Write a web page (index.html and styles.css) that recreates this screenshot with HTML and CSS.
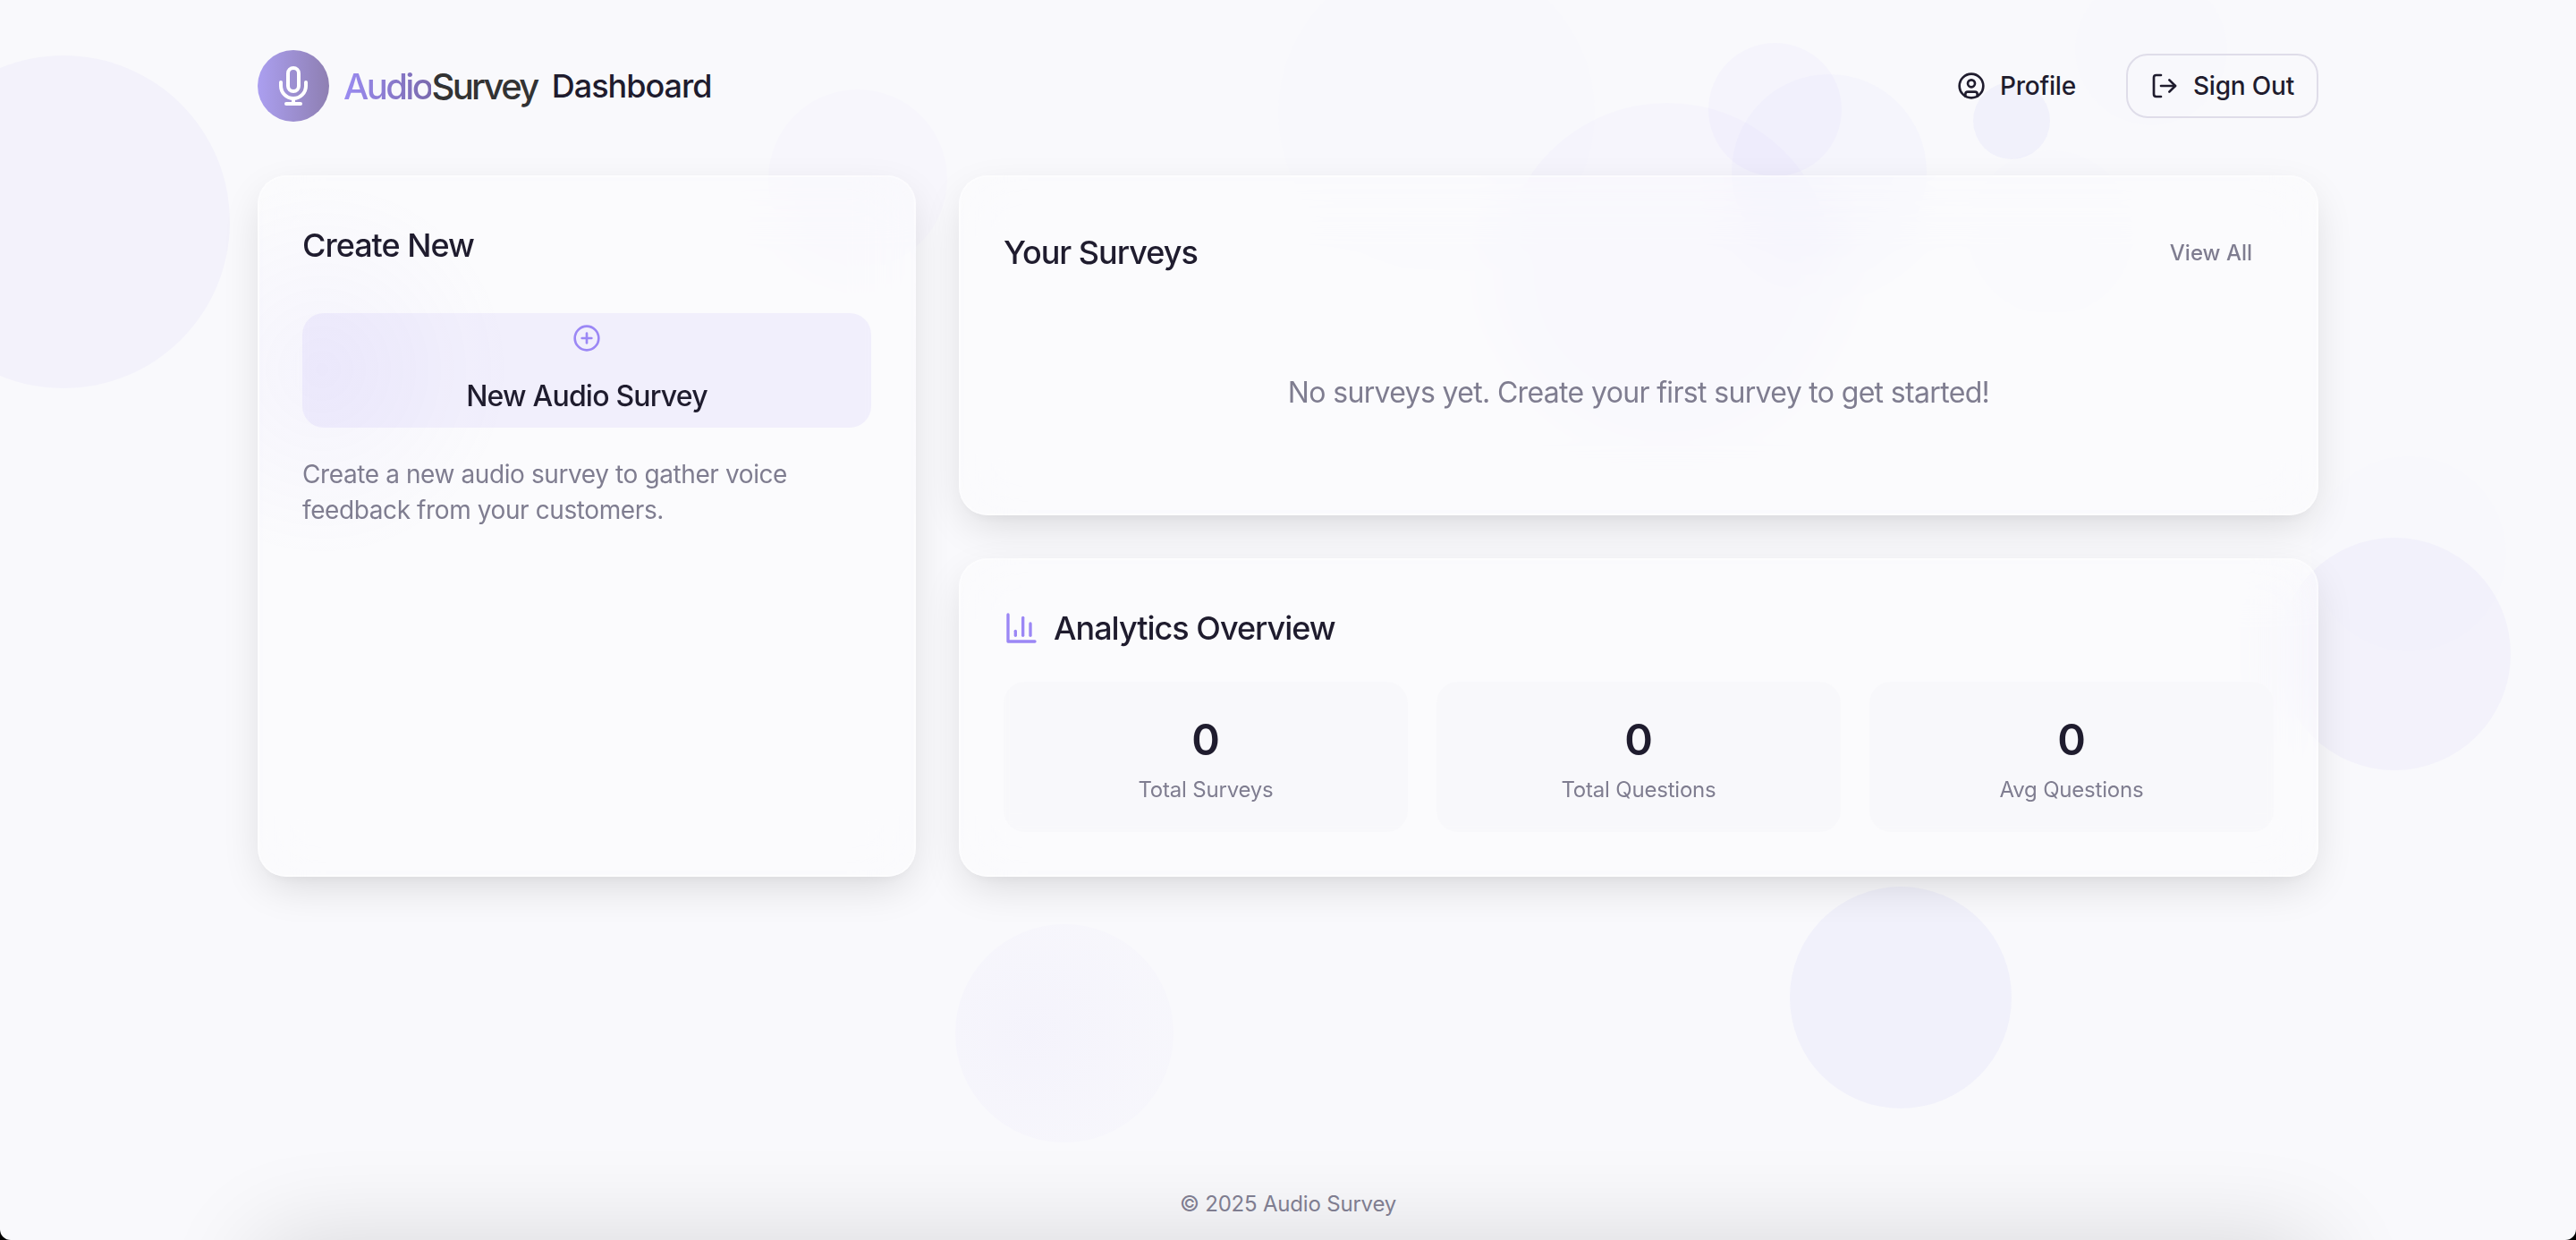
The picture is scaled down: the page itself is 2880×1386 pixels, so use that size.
FILE: index.html
```html
<!DOCTYPE html>
<html lang="en">
<head>
    <meta charset="UTF-8">
    <meta name="viewport" content="width=device-width, initial-scale=1.0">
    <title>AudioSurvey Dashboard</title>
    <link rel="stylesheet" href="styles.css">
</head>
<body>
    <!-- background bubbles -->
    <div class="bubbles">
        <span class="bubble b-left"></span>
        <span class="bubble b-top-card"></span>
        <span class="bubble b-top-faint"></span>
        <span class="bubble b-center"></span>
        <span class="bubble b-top-a"></span>
        <span class="bubble b-top-b"></span>
        <span class="bubble b-small"></span>
        <span class="bubble b-top-c"></span>
        <span class="bubble b-top-d"></span>
        <span class="bubble b-right"></span>
        <span class="bubble b-right-faint"></span>
        <span class="bubble b-bottom-a"></span>
        <span class="bubble b-bottom-b"></span>
    </div>

    <div class="container">
        <header class="header">
            <div class="brand">
                <div class="logo">
                    <svg class="icon icon-48" viewBox="0 0 24 24">
                        <path d="M12 2a3 3 0 0 0-3 3v7a3 3 0 0 0 6 0V5a3 3 0 0 0-3-3Z"/>
                        <path d="M19 10v2a7 7 0 0 1-14 0v-2"/>
                        <path d="M12 19v3"/>
                        <path d="M8 22h8"/>
                    </svg>
                </div>
                <span class="wordmark"><span class="wordmark-accent">Audio</span>Survey</span>
                <h1 class="page-title">Dashboard</h1>
            </div>
            <nav class="nav">
                <a class="nav-btn">
                    <svg class="icon icon-32" viewBox="0 0 24 24">
                        <circle cx="12" cy="12" r="10"/>
                        <circle cx="12" cy="10" r="3"/>
                        <path d="M7 20.662V19a2 2 0 0 1 2-2h6a2 2 0 0 1 2 2v1.662"/>
                    </svg>
                    Profile
                </a>
                <a class="nav-btn nav-btn-outline">
                    <svg class="icon icon-32" viewBox="0 0 24 24">
                        <path d="M9 21H5a2 2 0 0 1-2-2V5a2 2 0 0 1 2-2h4"/>
                        <path d="m16 17 5-5-5-5"/>
                        <path d="M21 12H9"/>
                    </svg>
                    Sign Out
                </a>
            </nav>
        </header>

        <main class="grid">
            <section class="card card-create">
                <h2 class="card-title create-title">Create New</h2>
                <button class="new-survey" type="button">
                    <svg class="icon icon-32 accent" viewBox="0 0 24 24">
                        <circle cx="12" cy="12" r="10"/>
                        <path d="M8 12h8"/>
                        <path d="M12 8v8"/>
                    </svg>
                    <span>New Audio Survey</span>
                </button>
                <p class="hint">Create a new audio survey to gather voice feedback from your customers.</p>
            </section>

            <div class="right-col">
                <section class="card">
                    <div class="card-head">
                        <h2 class="card-title">Your Surveys</h2>
                        <a class="view-all">View All</a>
                    </div>
                    <p class="empty">No surveys yet. Create your first survey to get started!</p>
                </section>

                <section class="card">
                    <div class="analytics-head">
                        <svg class="icon icon-40 accent" viewBox="0 0 24 24">
                            <path d="M3 3v18h18"/>
                            <path d="M18 17V9"/>
                            <path d="M13 17V5"/>
                            <path d="M8 17v-3"/>
                        </svg>
                        <h2 class="card-title">Analytics Overview</h2>
                    </div>
                    <div class="stats">
                        <div class="stat">
                            <div class="stat-value">0</div>
                            <div class="stat-label">Total Surveys</div>
                        </div>
                        <div class="stat">
                            <div class="stat-value">0</div>
                            <div class="stat-label">Total Questions</div>
                        </div>
                        <div class="stat">
                            <div class="stat-value">0</div>
                            <div class="stat-label">Avg Questions</div>
                        </div>
                    </div>
                </section>
            </div>
        </main>
    </div>

    <footer class="footer">
        <div class="fold-clip"><div class="fold-card"></div></div>
        <span class="footer-text">© 2025 Audio Survey</span>
    </footer>
</body>
</html>
```

FILE: styles.css
```css
* {
    box-sizing: border-box;
}
html {
    height: 100%;
    background-color: #000;
}
body {
    height: 100%;
    margin: 0;
    position: relative;
    overflow: hidden;
    display: flex;
    flex-direction: column;
    border-radius: 0 0 12px 12px;
    font-family: Inter, "Liberation Sans", sans-serif;
    background-color: #f9f9fc;
    color: #1f1c2e;
}

/* bubbles */
.bubbles {
    position: absolute;
    inset: 0;
    overflow: hidden;
}
.bubble {
    position: absolute;
    border-radius: 50%;
    background-color: rgba(155, 135, 245, 0.06);
}
.b-left { left: -115px; top: 62px; width: 372px; height: 372px; }
.b-top-card { left: 859px; top: 100px; width: 200px; height: 200px; background-color: rgba(155, 135, 245, 0.025); }
.b-top-faint { left: 1429px; top: -51px; width: 354px; height: 354px; background-color: rgba(155, 135, 245, 0.012); }
.b-center { left: 1679px; top: 115px; width: 370px; height: 370px; background-color: rgba(155, 135, 245, 0.03); }
.b-top-a { left: 1910px; top: 48px; width: 149px; height: 149px; background-color: rgba(155, 135, 245, 0.04); }
.b-top-b { left: 1936px; top: 83px; width: 218px; height: 218px; background-color: rgba(155, 135, 245, 0.035); }
.b-small { left: 2206px; top: 92px; width: 86px; height: 86px; background-color: rgba(125, 125, 240, 0.06); }
.b-top-c { left: 2201px; top: 168px; width: 184px; height: 184px; background-color: rgba(155, 135, 245, 0.012); }
.b-top-d { left: 2320px; top: -30px; width: 170px; height: 170px; background-color: rgba(155, 135, 245, 0.012); }
.b-right { left: 2547px; top: 601px; width: 260px; height: 260px; }
.b-right-faint { left: 2584px; top: 510px; width: 218px; height: 218px; background-color: rgba(155, 135, 245, 0.012); }
.b-bottom-a { left: 2001px; top: 991px; width: 248px; height: 248px; background-color: rgba(125, 125, 240, 0.06); }
.b-bottom-b {
    left: 1068px;
    top: 1033px;
    width: 244px;
    height: 244px;
    background: radial-gradient(circle at 35% 50%, rgba(155, 135, 245, 0.05), rgba(155, 135, 245, 0.025) 70%);
}

.container {
    position: relative;
    flex: 1;
    width: 2304px;
    margin: 0 auto;
    padding-top: 56px;
}

/* header */
.header {
    display: flex;
    justify-content: space-between;
    align-items: center;
    height: 80px;
    margin-bottom: 60px;
}
.brand {
    display: flex;
    align-items: center;
}
.logo {
    width: 80px;
    height: 80px;
    margin-right: 16px;
    display: flex;
    align-items: center;
    justify-content: center;
    border-radius: 50%;
    background: linear-gradient(90deg, #ab9ff0, #8e7fb2);
}
.icon {
    display: block;
    flex-shrink: 0;
    fill: none;
    stroke: currentColor;
    stroke-width: 2;
    stroke-linecap: round;
    stroke-linejoin: round;
}
.icon-48 { width: 48px; height: 48px; color: #fff; }
.icon-40 { width: 40px; height: 40px; }
.icon-32 { width: 32px; height: 32px; }
.accent { color: #9b87f5; }
.wordmark {
    font-size: 40px;
    font-weight: 500;
    letter-spacing: -2.6px;
    color: #333;
}
.wordmark-accent {
    background: linear-gradient(90deg, #9b8cf2, #7a6aae);
    -webkit-background-clip: text;
    background-clip: text;
    color: transparent;
}
.page-title {
    margin: 0 0 0 16px;
    font-size: 36px;
    font-weight: 500;
    letter-spacing: -1px;
}
.nav {
    display: flex;
    gap: 32px;
}
.nav-btn {
    display: flex;
    align-items: center;
    gap: 16px;
    height: 72px;
    padding: 0 24px;
    font-size: 28px;
    font-weight: 500;
    letter-spacing: -0.2px;
    border-radius: 24px;
}
.nav-btn-outline {
    padding: 0 25px;
    border: 2px solid #dfdde9;
}

/* cards */
.grid {
    display: grid;
    grid-template-columns: 736px 1fr;
    gap: 48px;
}
.right-col {
    display: flex;
    flex-direction: column;
    gap: 48px;
}
.card {
    padding: 48px;
    border: 2px solid rgba(255, 255, 255, 0.4);
    border-radius: 32px;
    background-color: rgba(255, 255, 255, 0.3);
    backdrop-filter: blur(32px);
    box-shadow: 0 16px 48px -8px rgba(0, 0, 0, 0.14), 0 8px 12px -4px rgba(0, 0, 0, 0.03);
}
.card-create {
    background-image: radial-gradient(circle 210px at 70px 215px, rgba(155, 135, 245, 0.06), rgba(155, 135, 245, 0));
}
.card-title {
    margin: 0;
    font-size: 36px;
    line-height: 56px;
    font-weight: 500;
    letter-spacing: -1px;
}
.create-title {
    margin-bottom: 48px;
}
.new-survey {
    display: flex;
    flex-direction: column;
    align-items: center;
    width: 100%;
    height: 128px;
    padding: 12px 0 0;
    border: none;
    border-radius: 24px;
    font-family: inherit;
    font-size: 32px;
    font-weight: 500;
    letter-spacing: -0.8px;
    color: #1f1c2e;
    background-color: rgba(155, 135, 245, 0.1);
}
.new-survey span {
    margin-top: 25px;
    line-height: 48px;
}
.hint {
    margin: 32px 0 0;
    font-size: 28px;
    line-height: 40px;
    letter-spacing: -0.4px;
    color: #7f7d90;
}
.card-head {
    display: flex;
    justify-content: space-between;
    align-items: center;
    height: 72px;
    margin-bottom: 32px;
}
.view-all {
    padding: 0 24px;
    font-size: 24px;
    font-weight: 500;
    color: #7f7d90;
}
.empty {
    margin: 0;
    padding: 65px 0 63px;
    text-align: center;
    font-size: 32px;
    line-height: 48px;
    letter-spacing: -0.66px;
    color: #7f7d90;
}
.analytics-head {
    display: flex;
    align-items: center;
    gap: 16px;
    margin-bottom: 32px;
}
.stats {
    display: grid;
    grid-template-columns: repeat(3, 1fr);
    gap: 32px;
}
.stat {
    height: 168px;
    padding-top: 33px;
    text-align: center;
    border-radius: 24px;
    background-color: rgba(247, 247, 250, 0.8);
}
.stat-value {
    font-size: 48px;
    line-height: 64px;
    font-weight: 600;
}
.stat-label {
    margin-top: 6px;
    font-size: 24px;
    line-height: 36px;
    letter-spacing: -0.2px;
    color: #7f7d90;
}

/* footer */
.footer {
    position: relative;
    height: 56px;
    text-align: center;
    font-size: 24px;
    line-height: 32px;
    letter-spacing: -0.2px;
    color: #7f7d90;
}
.footer-text {
    position: relative;
}
/* shadow of the card that sits just under the fold */
.fold-clip {
    position: absolute;
    left: 0;
    right: 0;
    bottom: 0;
    height: 110px;
    overflow: hidden;
}
.fold-card {
    position: absolute;
    left: 288px;
    right: 288px;
    top: 110px;
    height: 200px;
    border-radius: 32px;
    box-shadow: 0 0 110px rgba(0, 0, 0, 0.14);
}
```
